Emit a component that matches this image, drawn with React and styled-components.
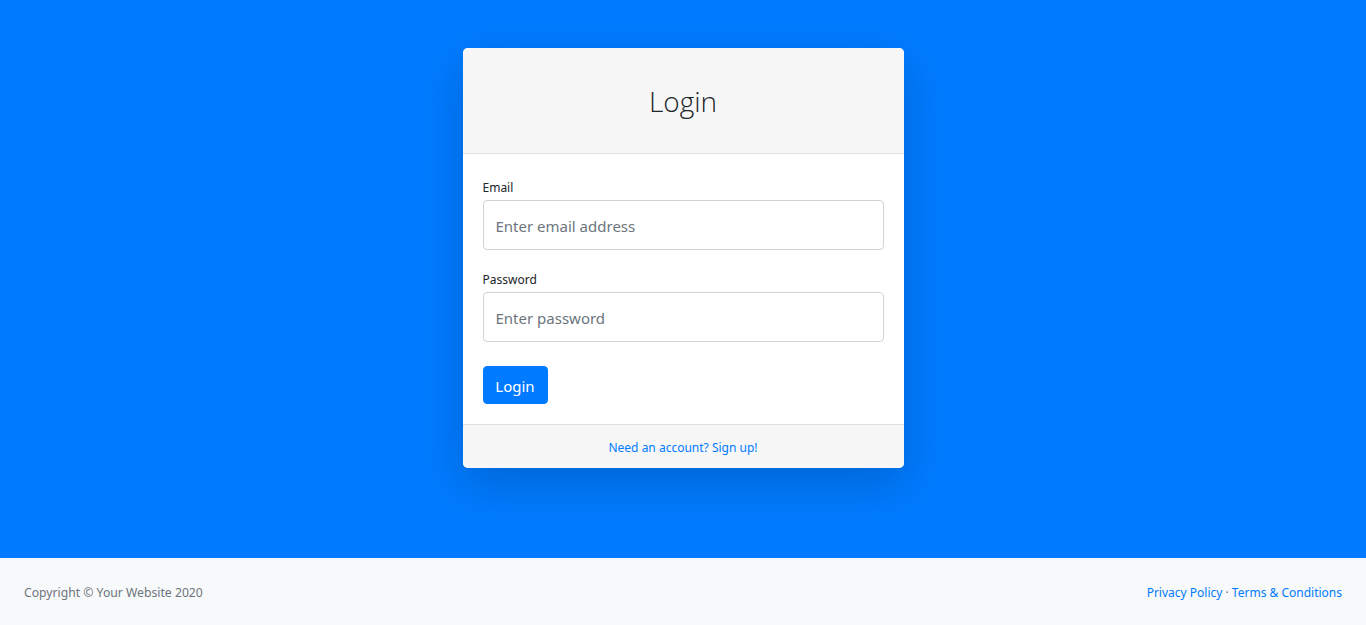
import React from "react";
import styled, { createGlobalStyle } from "styled-components";

const GlobalStyle = createGlobalStyle`
  html, body { margin: 0; padding: 0; }
  body {
    font-family: "Noto Sans", "Open Sans", "Liberation Sans", sans-serif;
    color: #212529;
    background: #fff;
  }
  * { box-sizing: border-box; }
`;

const Layout = styled.div`
  display: flex;
  flex-direction: column;
  min-height: 100vh;
`;

const Main = styled.main`
  flex: 1 1 auto;
  background: #007bff;
  display: flex;
  justify-content: center;
  align-items: flex-start;
  padding-top: 48px;
`;

const Card = styled.div`
  width: 441px;
  background: #fff;
  border-radius: 5px;
  box-shadow: 0 1rem 3rem rgba(0, 0, 0, 0.175);
  overflow: hidden;
`;

const CardHeader = styled.div`
  background: #f7f7f7;
  border-bottom: 1px solid #dfdfdf;
  height: 106px;
  padding-top: 2px;
  display: flex;
  align-items: center;
  justify-content: center;
`;

const Title = styled.h3`
  margin: 0;
  font-family: "Open Sans", "Noto Sans", sans-serif;
  font-weight: 300;
  font-size: 28px;
  line-height: 1.2;
  color: #212529;
`;

const CardBody = styled.form`
  padding: 23px 20px 20px;
  display: flex;
  flex-direction: column;
`;

const FormGroup = styled.div`
  display: flex;
  flex-direction: column;
  margin-bottom: ${(p) => p.$mb || 0}px;
`;

const Label = styled.label`
  font-size: 12px;
  line-height: 19px;
  padding-top: 1px;
  margin-bottom: 3px;
  color: #212529;
`;

const Input = styled.input`
  height: 50px;
  width: 100%;
  border: 1px solid #ced4da;
  border-radius: 4px;
  padding: 2px 12px 0;
  font-family: inherit;
  font-size: 15px;
  color: #495057;
  background: #fff;
  outline: none;
  &::placeholder { color: #6c757d; opacity: 1; }
`;

const Button = styled.button`
  align-self: flex-start;
  height: 38px;
  width: 65px;
  margin-top: 24px;
  background: #007bff;
  border: 1px solid #007bff;
  border-radius: 4px;
  color: #fff;
  font-family: inherit;
  font-size: 15px;
  padding: 1px 0 0;
  cursor: pointer;
`;

const CardFooter = styled.div`
  background: #f7f7f7;
  border-top: 1px solid #dfdfdf;
  height: 44px;
  padding-top: 2px;
  display: flex;
  align-items: center;
  justify-content: center;
  font-size: 12px;
`;

const Link = styled.a`
  color: #007bff;
  text-decoration: none;
`;

const Footer = styled.footer`
  background: #f8f9fa;
  height: 67px;
  padding: 2px 24px 0;
  display: flex;
  align-items: center;
  justify-content: space-between;
`;

const Muted = styled.div`
  color: #6c757d;
  font-size: 12.2px;
`;

const Links = styled.div`
  color: #6c757d;
  font-size: 12px;
`;

export default function App() {
  return (
    <>
      <GlobalStyle />
      <Layout>
        <Main>
          <Card>
            <CardHeader>
              <Title>Login</Title>
            </CardHeader>
            <CardBody onSubmit={(e) => e.preventDefault()}>
              <FormGroup $mb={19}>
                <Label htmlFor="email">Email</Label>
                <Input id="email" type="email" placeholder="Enter email address" />
              </FormGroup>
              <FormGroup>
                <Label htmlFor="password">Password</Label>
                <Input id="password" type="password" placeholder="Enter password" />
              </FormGroup>
              <Button type="submit">Login</Button>
            </CardBody>
            <CardFooter>
              <Link href="#">Need an account? Sign up!</Link>
            </CardFooter>
          </Card>
        </Main>
        <Footer>
          <Muted>Copyright © Your Website 2020</Muted>
          <Links>
            <Link href="#">Privacy Policy</Link> · <Link href="#">Terms &amp; Conditions</Link>
          </Links>
        </Footer>
      </Layout>
    </>
  );
}
